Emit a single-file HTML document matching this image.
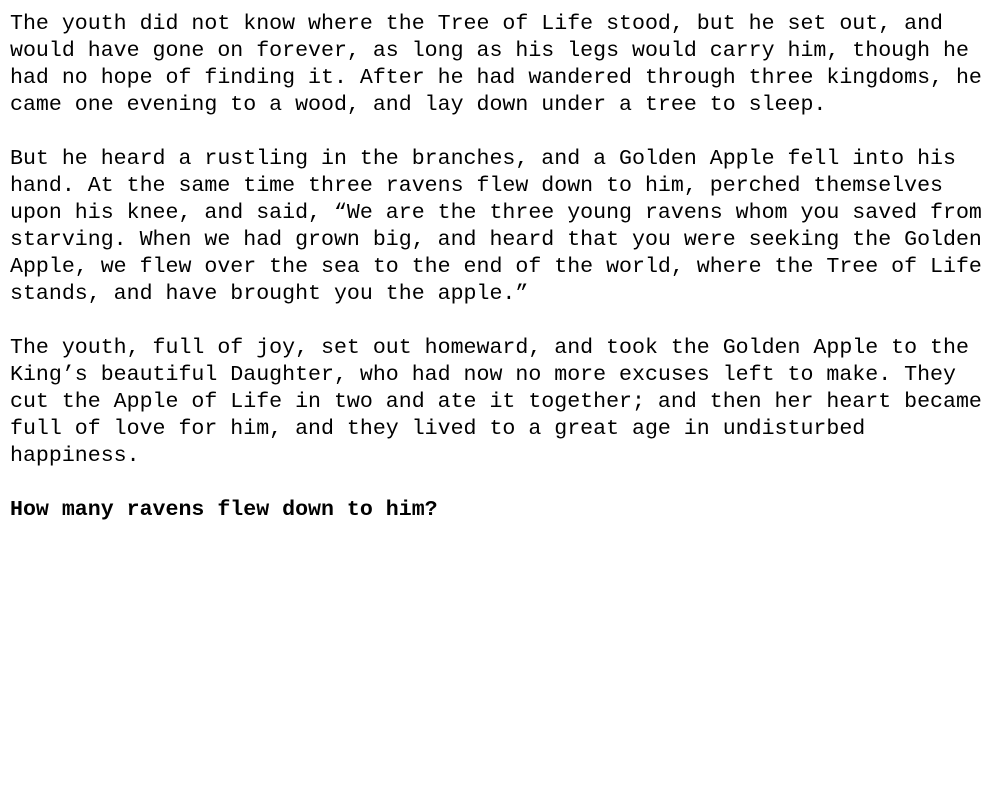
<!DOCTYPE html>
<html><head><meta charset="utf-8"><style>
html,body{margin:0;padding:0;background:#fff;width:1000px;height:800px;overflow:hidden}
pre{margin:0;position:absolute;left:10px;top:11px;font-family:"Liberation Mono",monospace;font-size:21.6px;line-height:27px;color:#000;white-space:pre}
b{font-weight:bold}
</style></head><body><pre>The youth did not know where the Tree of Life stood, but he set out, and
would have gone on forever, as long as his legs would carry him, though he
had no hope of finding it. After he had wandered through three kingdoms, he
came one evening to a wood, and lay down under a tree to sleep.

But he heard a rustling in the branches, and a Golden Apple fell into his
hand. At the same time three ravens flew down to him, perched themselves
upon his knee, and said, “We are the three young ravens whom you saved from
starving. When we had grown big, and heard that you were seeking the Golden
Apple, we flew over the sea to the end of the world, where the Tree of Life
stands, and have brought you the apple.”

The youth, full of joy, set out homeward, and took the Golden Apple to the
King’s beautiful Daughter, who had now no more excuses left to make. They
cut the Apple of Life in two and ate it together; and then her heart became
full of love for him, and they lived to a great age in undisturbed
happiness.

<b>How many ravens flew down to him?</b></pre></body></html>
